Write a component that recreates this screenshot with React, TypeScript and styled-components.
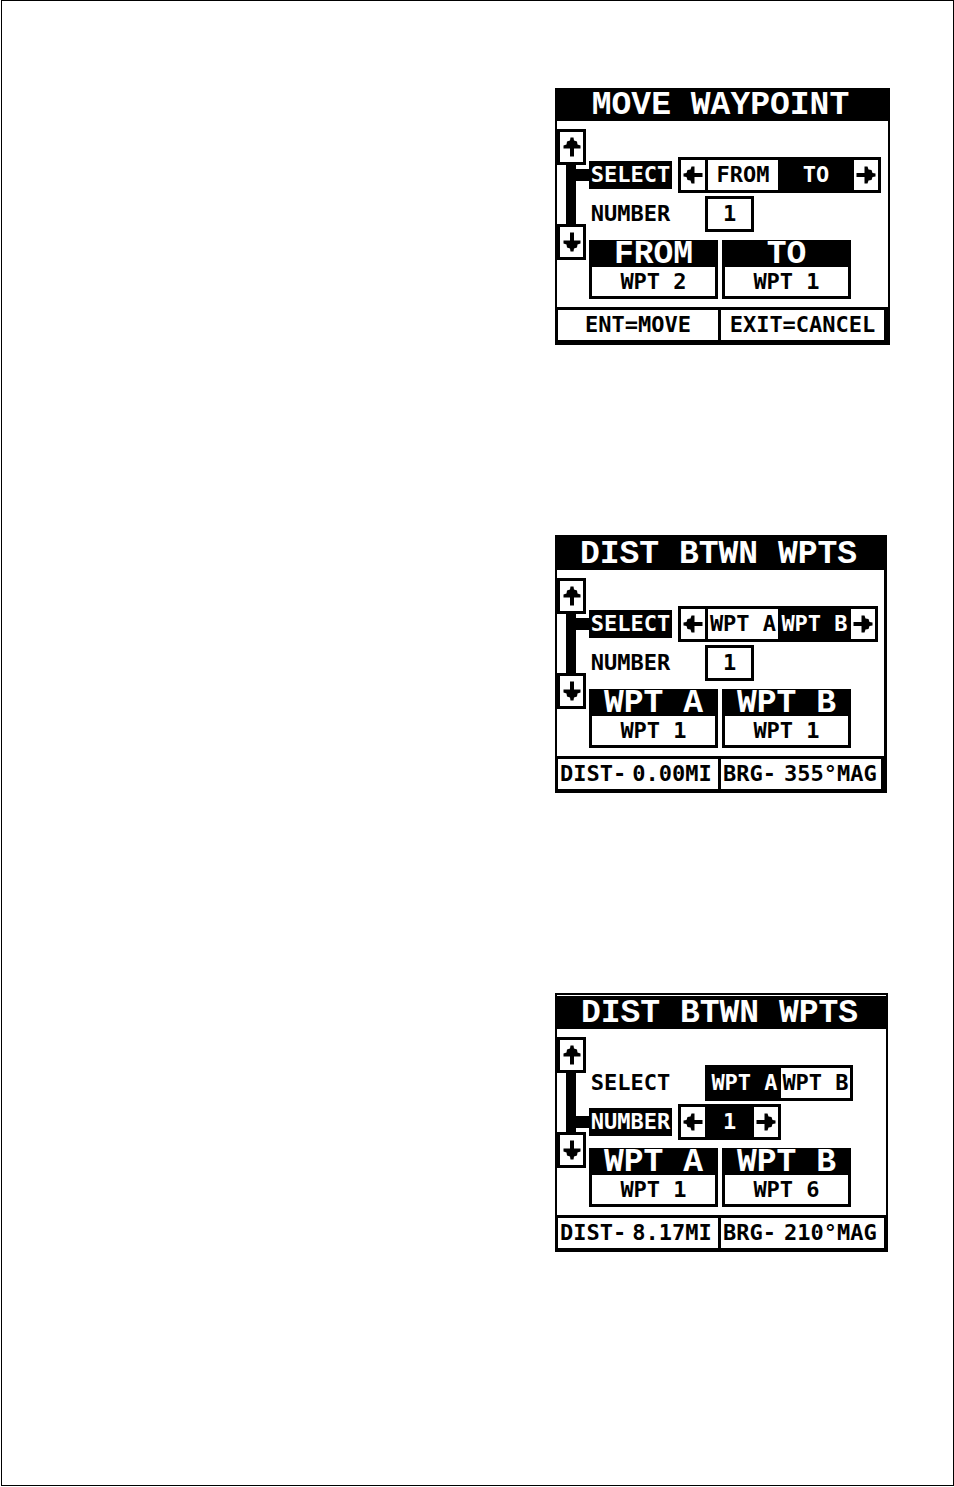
import React, { useState } from "react";
import styled, { createGlobalStyle } from "styled-components";

const INK = "#000";
const PAPER = "#fff";

const GlobalStyle = createGlobalStyle`
  *, *::before, *::after { box-sizing: border-box; }
  body { margin: 0; background: ${PAPER}; color: ${INK}; }
  button, input, output { font: inherit; color: inherit; margin: 0; padding: 0; border: 0; border-radius: 0; }
`;

const Page = styled.main`
  margin: 0 0 1px 1px;
  min-height: calc(100vh - 1px);
  padding: 87px 63px 87px 24px;
  border: 1px solid ${INK};
`;

const Stack = styled.div`
  width: fit-content;
  margin-left: auto;
  display: flex;
  flex-direction: column;
  align-items: flex-start;
`;

const Screen = styled.section<{ $width: number; $top: number; $right: number; $bottom: number; $gap: number }>`
  width: ${(p) => p.$width}px;
  margin-top: ${(p) => p.$gap}px;
  border: solid ${INK};
  border-width: ${(p) => p.$top}px ${(p) => p.$right}px ${(p) => p.$bottom}px 2px;
  background: ${PAPER};
  font: bold 22px/28px "DejaVu Sans Mono", monospace;
`;

const Title = styled.h2<{ $inset: boolean }>`
  margin: ${(p) => (p.$inset ? 1 : 0)}px 0 0;
  height: 33px;
  padding-right: 4px;
  background: ${INK};
  color: ${PAPER};
  font: bold 33px/35px "Liberation Mono", monospace;
  text-align: center;
  white-space: pre;
`;

const Body = styled.div`
  display: flex;
  height: 186px;
`;

const Rail = styled.nav`
  display: flex;
  flex-direction: column;
  align-items: flex-start;
  width: 19px;
  height: 131px;
  margin-top: 8px;
`;

const RailButton = styled.button`
  display: grid;
  place-items: center;
  flex: none;
  width: 29px;
  height: 36px;
  border: 3px solid ${INK};
  background: ${PAPER};
`;

const Track = styled.div`
  flex: 1;
  align-self: flex-end;
  width: 10px;
  background: ${INK};
`;

const Rows = styled.div`
  flex: 1;
  padding-top: 36px;
`;

const Row = styled.div`
  display: flex;
  align-items: center;
  height: 36px;
  margin-bottom: 3px;
`;

const Connector = styled.span<{ $on: boolean }>`
  width: 13px;
  height: 12px;
  background: ${(p) => (p.$on ? INK : "transparent")};
`;

const Label = styled.label<{ $on: boolean }>`
  width: 83px;
  height: 28px;
  text-align: center;
  background: ${(p) => (p.$on ? INK : "transparent")};
  color: ${(p) => (p.$on ? PAPER : INK)};
`;

const Control = styled.div<{ $arrows: boolean }>`
  display: flex;
  height: 36px;
  margin-left: ${(p) => (p.$arrows ? 6 : 33)}px;
  border: 3px solid ${INK};
`;

const StepButton = styled.button`
  display: grid;
  place-items: center;
  width: 24px;
  background: ${PAPER};
`;

const Option = styled.button<{ $on: boolean; $rule: boolean; $width: number }>`
  width: ${(p) => (p.$on ? p.$width : p.$rule ? 73 : 69)}px;
  border-left: ${(p) => (p.$rule ? 3 : 0)}px solid ${INK};
  background: ${(p) => (p.$on ? INK : PAPER)};
  color: ${(p) => (p.$on ? PAPER : INK)};
  white-space: pre;
`;

const NumberInput = styled.input<{ $on: boolean }>`
  width: ${(p) => (p.$on ? 49 : 43)}px;
  background: ${(p) => (p.$on ? INK : PAPER)};
  color: ${(p) => (p.$on ? PAPER : INK)};
  text-align: center;
`;

const Cards = styled.dl`
  display: flex;
  gap: 4px;
  margin: 8px 0 0 13px;
`;

const Card = styled.div`
  width: 129px;
  height: 59px;
  border: 3px solid ${INK};
  border-top: 0;
`;

const CardName = styled.dt`
  height: 27px;
  background: ${INK};
  color: ${PAPER};
  font: bold 33px/30px "Liberation Mono", monospace;
  text-align: center;
  white-space: pre;
`;

const CardValue = styled.dd`
  margin: 0;
  height: 29px;
  line-height: 30px;
  text-align: center;
`;

const Footer = styled.footer<{ $pad: number }>`
  display: grid;
  grid-template-columns: 160px 1fr;
  gap: 3px;
  height: 33px;
  padding: 3px ${(p) => p.$pad}px 0 1px;
  background: ${INK};
`;

const FooterButton = styled.button`
  background: ${PAPER};
`;

const Readout = styled.output<{ $gap: number }>`
  display: flex;
  gap: ${(p) => p.$gap}px;
  padding-left: 2px;
  background: ${PAPER};
  line-height: 30px;
`;

type Dir = "up" | "down" | "left" | "right";
const angle: Record<Dir, number> = { up: 0, right: 90, down: 180, left: 270 };

function Arrow({ dir }: { dir: Dir }) {
  return (
    <svg width="20" height="20" viewBox="0 0 20 20" aria-hidden="true">
      <path
        transform={`rotate(${angle[dir]} 10 10)`}
        d="M8.500 0.500h3l0.500 3 3 1 0.500 3 3 1v3h-6.500v8h-4v-8H1.500v-3l3-1 0.500-3 3-1z"
      />
    </svg>
  );
}

interface ScreenProps {
  id: string;
  title: string;
  width: number;
  top: number;
  right: number;
  bottom: number;
  gap: number;
  inset?: boolean;
  active: "select" | "number";
  options: [string, string];
  optionWidth: number;
  chosen: number;
  values: [string, string];
  footerPad: number;
  children: React.ReactNode;
}

function WaypointScreen(p: ScreenProps) {
  const [chosen, setChosen] = useState(p.chosen);
  const [number, setNumber] = useState("1");
  const onSelect = p.active === "select";
  const onNumber = p.active === "number";
  const step = (by: number) => setNumber(String(Math.max(1, Number(number) + by)));

  return (
    <Screen $width={p.width} $top={p.top} $right={p.right} $bottom={p.bottom} $gap={p.gap}>
      <Title $inset={!!p.inset}>{p.title}</Title>
      <Body>
        <Rail aria-label="Menu rows">
          <RailButton aria-label="Previous row"><Arrow dir="up" /></RailButton>
          <Track />
          <RailButton aria-label="Next row"><Arrow dir="down" /></RailButton>
        </Rail>
        <Rows>
          <Row>
            <Connector $on={onSelect} />
            <Label $on={onSelect} htmlFor={`${p.id}-option-0`}>SELECT</Label>
            <Control $arrows={onSelect}>
              {onSelect && <StepButton aria-label="Select previous" onClick={() => setChosen(0)}><Arrow dir="left" /></StepButton>}
              {p.options.map((name, i) => (
                <Option
                  key={name}
                  id={`${p.id}-option-${i}`}
                  $on={chosen === i}
                  $rule={onSelect && i === 0}
                  $width={p.optionWidth}
                  aria-pressed={chosen === i}
                  onClick={() => setChosen(i)}
                >
                  {name}
                </Option>
              ))}
              {onSelect && <StepButton aria-label="Select next" onClick={() => setChosen(1)}><Arrow dir="right" /></StepButton>}
            </Control>
          </Row>
          <Row>
            <Connector $on={onNumber} />
            <Label $on={onNumber} htmlFor={`${p.id}-number`}>NUMBER</Label>
            <Control $arrows={onNumber}>
              {onNumber && <StepButton aria-label="Lower number" onClick={() => step(-1)}><Arrow dir="left" /></StepButton>}
              <NumberInput id={`${p.id}-number`} $on={onNumber} value={number} onChange={(e) => setNumber(e.target.value)} />
              {onNumber && <StepButton aria-label="Raise number" onClick={() => step(1)}><Arrow dir="right" /></StepButton>}
            </Control>
          </Row>
          <Cards>
            {p.options.map((name, i) => (
              <Card key={name}>
                <CardName>{name}</CardName>
                <CardValue>{p.values[i]}</CardValue>
              </Card>
            ))}
          </Cards>
        </Rows>
      </Body>
      <Footer $pad={p.footerPad}>{p.children}</Footer>
    </Screen>
  );
}

export default function App() {
  return (
    <>
      <GlobalStyle />
      <Page>
        <Stack>
          <WaypointScreen
            id="move" title="MOVE WAYPOINT" width={335} top={0} right={2} bottom={5} gap={0}
            active="select" options={["FROM", "TO"]} optionWidth={76} chosen={1} values={["WPT 2", "WPT 1"]} footerPad={4}
          >
            <FooterButton>ENT=MOVE</FooterButton>
            <FooterButton>EXIT=CANCEL</FooterButton>
          </WaypointScreen>
          <WaypointScreen
            id="dist" title="DIST BTWN WPTS" width={332} top={2} right={3} bottom={4} gap={190}
            active="select" options={["WPT A", "WPT B"]} optionWidth={73} chosen={1} values={["WPT 1", "WPT 1"]} footerPad={3}
          >
            <Readout $gap={6}><span>DIST-</span><span>0.00MI</span></Readout>
            <Readout $gap={8}><span>BRG-</span><span>355°MAG</span></Readout>
          </WaypointScreen>
          <WaypointScreen
            id="dist-number" title="DIST BTWN WPTS" width={333} top={2} right={2} bottom={4} gap={200} inset
            active="number" options={["WPT A", "WPT B"]} optionWidth={73} chosen={0} values={["WPT 1", "WPT 6"]} footerPad={2}
          >
            <Readout $gap={6}><span>DIST-</span><span>8.17MI</span></Readout>
            <Readout $gap={8}><span>BRG-</span><span>210°MAG</span></Readout>
          </WaypointScreen>
        </Stack>
      </Page>
    </>
  );
}
